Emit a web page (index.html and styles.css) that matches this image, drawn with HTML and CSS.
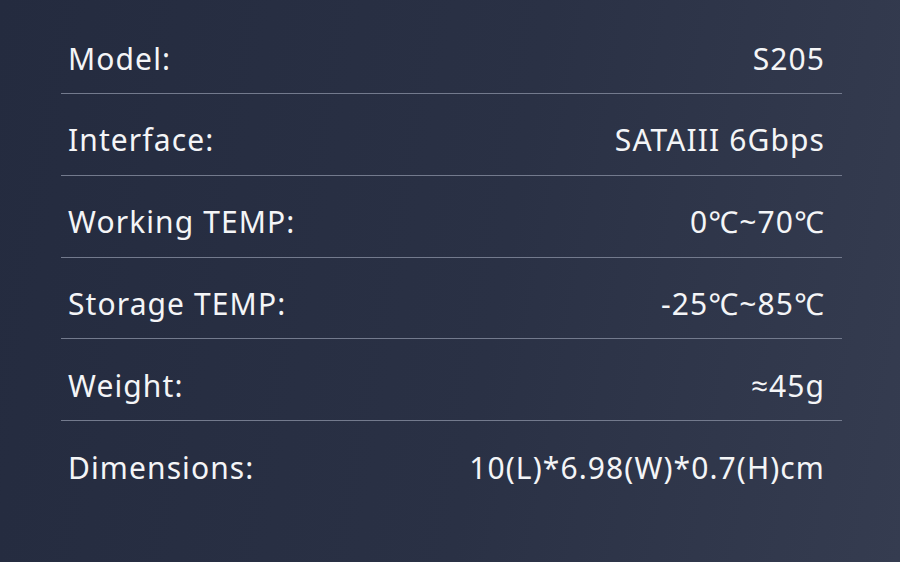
FILE: index.html
```html
<!DOCTYPE html>
<html lang="en">
<head>
<meta charset="utf-8">
<title>Specifications</title>
<link rel="stylesheet" href="styles.css">
</head>
<body>
<div class="page">
  <div class="specs">
    <div class="row"><span class="label">Model:</span><span class="value">S205</span></div>
    <div class="row"><span class="label">Interface:</span><span class="value">SATAIII 6Gbps</span></div>
    <div class="row"><span class="label">Working TEMP:</span><span class="value">0℃~70℃</span></div>
    <div class="row"><span class="label">Storage TEMP:</span><span class="value">-25℃~85℃</span></div>
    <div class="row"><span class="label">Weight:</span><span class="value">≈45g</span></div>
    <div class="row"><span class="label">Dimensions:</span><span class="value">10(L)*6.98(W)*0.7(H)cm</span></div>
  </div>
</div>
</body>
</html>
```
FILE: styles.css
```css
html, body {
  margin: 0;
  padding: 0;
}
body {
  width: 900px;
  height: 562px;
  overflow: hidden;
  font-family: "Noto Sans", "Open Sans", sans-serif;
  color: #f4f5f7;
}
.page {
  width: 900px;
  height: 562px;
  box-sizing: border-box;
  padding: 12.25px 58px 0 61px;
  background: linear-gradient(100deg, #242b3f 0%, #2a3145 55%, #353c50 100%);
}
.specs {
  display: flex;
  flex-direction: column;
}
.row {
  display: flex;
  justify-content: space-between;
  align-items: center;
  height: 81.75px;
  box-sizing: border-box;
  padding: 12px 17px 0 7px;
  border-bottom: 1px solid #737a8d;
  font-size: 30px;
  line-height: 30px;
  letter-spacing: 1.1px;
}
.row:last-child {
  border-bottom: none;
}
```
